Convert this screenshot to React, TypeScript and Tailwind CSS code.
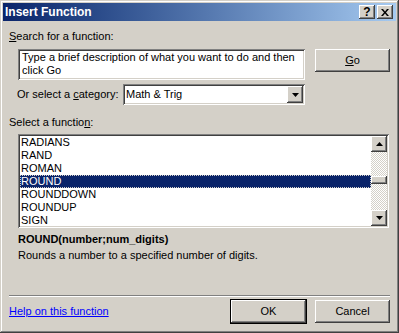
const raised =
  "shadow-[inset_-1px_-1px_#404040,inset_1px_1px_#ffffff,inset_-2px_-2px_#808080,inset_2px_2px_#d4d0c8]";
const sunken =
  "shadow-[inset_1px_1px_#808080,inset_-1px_-1px_#ffffff,inset_2px_2px_#404040,inset_-2px_-2px_#d4d0c8]";

const functions = ["RADIANS", "RAND", "ROMAN", "ROUND", "ROUNDDOWN", "ROUNDUP", "SIGN"];

function Arrow({ up = false }: { up?: boolean }) {
  return (
    <svg width="7" height="4" viewBox="0 0 7 4" className={up ? "rotate-180" : ""}>
      <path d="M0 0h7L3.5 4z" fill="#000" />
    </svg>
  );
}

function Button({ children, isDefault = false }: { children: React.ReactNode; isDefault?: boolean }) {
  return (
    <div
      className={`flex h-[23px] w-[75px] items-center justify-center bg-[#d4d0c8] ${
        isDefault
          ? "shadow-[0_0_0_1px_#000,inset_-1px_-1px_#404040,inset_1px_1px_#ffffff,inset_-2px_-2px_#808080]"
          : raised
      }`}
    >
      {children}
    </div>
  );
}

export default function App() {
  return (
    <div
      className="flex h-[333px] w-[399px] flex-col bg-[#d4d0c8] p-[3px] text-[11px] leading-[13px] text-black shadow-[inset_-1px_-1px_#404040,inset_1px_1px_#d4d0c8,inset_-2px_-2px_#808080,inset_2px_2px_#ffffff]"
      style={{ fontFamily: '"Liberation Sans", Arial, sans-serif' }}
    >
      {/* title bar */}
      <div className="flex h-[18px] items-center bg-gradient-to-r from-[#0a246a] to-[#a6caf0] pl-[2px] pr-[3px]">
        <span className="flex-1 text-[12px] font-bold text-white">Insert Function</span>
        <div className={`flex h-[14px] w-[16px] items-center justify-center bg-[#d4d0c8] text-[12px] font-bold ${raised}`}>
          ?
        </div>
        <div className={`ml-[2px] flex h-[14px] w-[16px] items-center justify-center bg-[#d4d0c8] ${raised}`}>
          <svg width="8" height="7" viewBox="0 0 8 7">
            <path d="M0 0h2l2 2.5L6 0h2L5 3.5 8 7H6L4 4.5 2 7H0l3-3.5z" fill="#000" />
          </svg>
        </div>
      </div>

      <div className="flex flex-1 flex-col px-[6px]">
        <div className="mt-[9px]">
          <span className="underline">S</span>earch for a function:
        </div>

        <div className="mt-[6px] flex items-start pl-[9px]">
          <div className={`h-[31px] w-[287px] bg-white px-[4px] pt-[2px] ${sunken}`}>
            Type a brief description of what you want to do and then
            <br />
            click Go
          </div>
          <div className="ml-[10px]">
            <Button>
              <span className="underline">G</span>o
            </Button>
          </div>
        </div>

        <div className="mt-[4px] flex items-center pl-[8px]">
          <span className="w-[106px]">
            Or select a <span className="underline">c</span>ategory:
          </span>
          <div className={`flex h-[21px] w-[182px] items-center bg-white pl-[3px] pr-[2px] ${sunken}`}>
            <span className="flex-1">Math &amp; Trig</span>
            <div className={`flex h-[17px] w-[16px] items-center justify-center bg-[#d4d0c8] ${raised}`}>
              <Arrow />
            </div>
          </div>
        </div>

        <div className="mt-[11px]">
          Select a functio<span className="underline">n</span>:
        </div>

        <div className={`mt-[5px] ml-[9px] flex h-[94px] w-[371px] bg-white p-[2px] ${sunken}`}>
          <div className="flex-1">
            {functions.map((f) => (
              <div
                key={f}
                className={`h-[13px] pl-[1px] ${
                  f === "ROUND" ? "bg-[#0a246a] text-white outline-1 outline-dotted outline-[#d4d0c8] -outline-offset-1" : ""
                }`}
              >
                {f}
              </div>
            ))}
          </div>
          <div className="flex w-[16px] flex-col bg-[repeating-conic-gradient(#d4d0c8_0_25%,#ffffff_0_50%)] bg-[length:2px_2px]">
            <div className={`flex h-[16px] items-center justify-center bg-[#d4d0c8] ${raised}`}>
              <Arrow up />
            </div>
            <div className="h-[24px]" />
            <div className={`h-[8px] bg-[#d4d0c8] ${raised}`} />
            <div className="flex-1" />
            <div className={`flex h-[16px] items-center justify-center bg-[#d4d0c8] ${raised}`}>
              <Arrow />
            </div>
          </div>
        </div>

        <div className="mt-[5px] pl-[9px] font-bold">ROUND(number;num_digits)</div>
        <div className="mt-[3px] pl-[9px]">Rounds a number to a specified number of digits.</div>

        <div className="mt-[33px] h-[2px] w-[381px] border-t border-b border-t-[#808080] border-b-white" />

        <div className="mt-[3px] flex items-center">
          <span className="flex-1 cursor-pointer text-[#0000ff] underline">Help on this function</span>
          <Button isDefault>OK</Button>
          <div className="ml-[9px]">
            <Button>Cancel</Button>
          </div>
        </div>
      </div>
    </div>
  );
}
